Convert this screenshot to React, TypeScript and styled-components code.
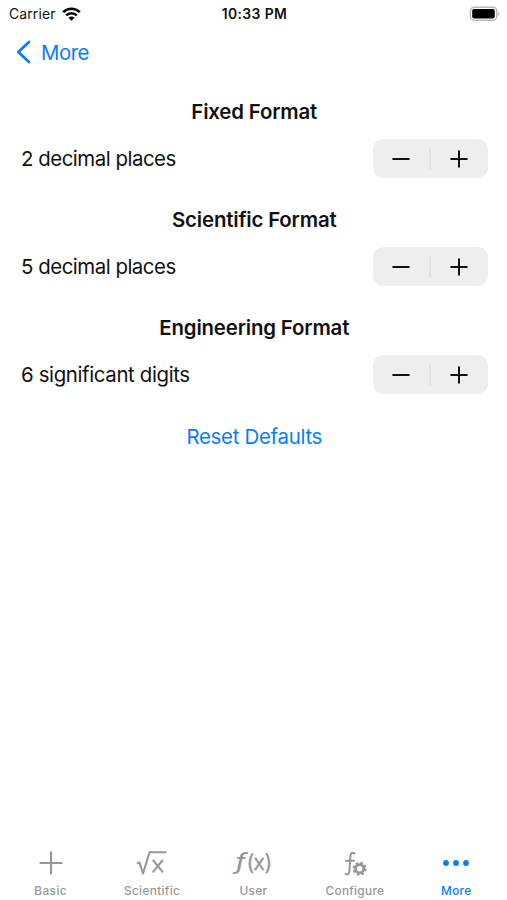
import React, { useState } from "react";
import styled, { createGlobalStyle } from "styled-components";

const BLUE = "#0a7cf8";
const GREY = "#979797";

const GlobalStyle = createGlobalStyle`
  * { box-sizing: border-box; }
  body { margin: 0; background: #fff; }
  button { font: inherit; border: 0; padding: 0; background: none; cursor: pointer; }
`;

const Screen = styled.div`
  display: flex;
  flex-direction: column;
  width: 100%;
  height: 900px;
  overflow: hidden;
  background: #fff;
  color: #111;
  font-family: Inter, "Liberation Sans", sans-serif;
`;

const StatusBar = styled.header`
  display: grid;
  grid-template-columns: 1fr auto 1fr;
  align-items: center;
  height: 27px;
  padding: 0 7px 0 9px;
  font-size: 13.9px;
  line-height: 17px;
`;

const Carrier = styled.div`
  display: flex;
  align-items: center;
  gap: 6px;
  letter-spacing: 0.15px;

  span { padding-top: 1px; }
`;

const Clock = styled.div`
  padding-top: 2px;
  font-weight: 600;
  font-size: 13.9px;
  letter-spacing: 0.4px;
`;

const BatterySlot = styled.div`
  display: flex;
  justify-content: flex-end;
`;

const NavBar = styled.nav`
  display: flex;
  align-items: center;
  height: 50px;
  padding-left: 16px;
`;

const BackButton = styled.button`
  display: flex;
  align-items: center;
  gap: 9px;
  color: ${BLUE};
  font-size: 20.4px;
  line-height: 24px;
  letter-spacing: -0.5px;

  span { padding-top: 1px; }
`;

const Content = styled.main`
  flex: 1;
  display: flex;
  flex-direction: column;
  padding: 23px 19.5px 0 21px;
`;

const Section = styled.section`
  height: 108.2px;
`;

const Heading = styled.h2<{ $spacing: number }>`
  margin: 0;
  height: 24px;
  font-size: 20.4px;
  line-height: 24px;
  font-weight: 600;
  text-align: center;
  letter-spacing: ${(p) => p.$spacing}px;
`;

const SettingRow = styled.div`
  display: flex;
  align-items: center;
  justify-content: space-between;
  height: 39px;
  margin-top: 15px;
`;

const SettingLabel = styled.span<{ $spacing: number }>`
  font-size: 20.4px;
  line-height: 24px;
  letter-spacing: ${(p) => p.$spacing}px;
`;

const Stepper = styled.div`
  display: flex;
  align-items: center;
  width: 115px;
  height: 39px;
  border-radius: 10px;
  background: #eeeeef;
`;

const StepButton = styled.button`
  flex: 1;
  height: 100%;
  display: flex;
  align-items: center;
  justify-content: center;
  color: #111;
`;

const StepDivider = styled.span`
  width: 2px;
  height: 22px;
  border-radius: 1px;
  background: #e2e2e3;
`;

const ResetButton = styled.button`
  align-self: center;
  color: ${BLUE};
  font-size: 20.4px;
  line-height: 24px;
  letter-spacing: -0.28px;
`;

const TabBar = styled.footer`
  display: grid;
  grid-template-columns: repeat(5, 1fr);
  height: 53px;
`;

const Tab = styled.button<{ $active: boolean }>`
  display: flex;
  flex-direction: column;
  align-items: center;
  color: ${(p) => (p.$active ? BLUE : GREY)};
`;

const TabLabel = styled.span<{ $spacing: number }>`
  margin-top: 5px;
  font-size: 11.8px;
  line-height: 14px;
  font-weight: 500;
  letter-spacing: ${(p) => p.$spacing}px;
`;

const TabIcon = styled.svg`
  display: block;
  width: 44px;
  height: 32px;
  fill: none;
  stroke: currentColor;
  stroke-linecap: round;
  stroke-linejoin: round;

  text {
    fill: currentColor;
    font-family: Inter, sans-serif;
  }
`;

const WifiIcon = () => (
  <svg width="19" height="14" viewBox="0 0 19 14" fill="none" stroke="#000" strokeWidth="2.5">
    <path d="M1.2 5.2C5.8 .6 13.2 .6 17.8 5.2" />
    <path d="M4.1 8.3C7.1 5.4 11.9 5.4 14.9 8.3" />
    <path d="M6.5 10.7C8.2 9.1 10.8 9.1 12.5 10.7L9.5 13.7Z" fill="#000" stroke="none" />
  </svg>
);

const BatteryIcon = () => (
  <svg width="31" height="16" viewBox="0 0 31 16">
    <rect x="1.4" y="1.2" width="26.4" height="13" rx="4" fill="#fff" stroke="#b8b8b8" strokeWidth="1.5" />
    <rect x="3.2" y="3" width="22.6" height="9.4" rx="1.8" fill="#000" />
    <path d="M29.3 5.5C31 6.2 31 9.2 29.3 9.9Z" fill="#b8b8b8" />
  </svg>
);

const ChevronIcon = () => (
  <svg width="16" height="24" viewBox="0 0 16 24" fill="none" stroke="currentColor" strokeWidth="2.7" strokeLinecap="round" strokeLinejoin="round">
    <path d="M13 2L2.3 12L13 22" />
  </svg>
);

const StepIcon = ({ plus }: { plus?: boolean }) => (
  <svg width="18" height="18" viewBox="0 0 18 18" fill="none" stroke="currentColor" strokeWidth="2" strokeLinecap="round">
    <path d={plus ? "M1.2 9H16.8M9 1.2V16.8" : "M1.2 9H16.8"} />
  </svg>
);

const BasicIcon = () => (
  <TabIcon viewBox="0 0 44 32" strokeWidth="2.2">
    <path d="M11.4 16H32.6M22 5.4V26.6" />
  </TabIcon>
);

const RootIcon = () => (
  <TabIcon viewBox="0 0 44 32" strokeWidth="2.1">
    <path d="M7.8 16.2L9.5 15.6L13 26.5L19.6 5.3H35.6" />
    <path d="M23.3 13.5L32.4 24.7M32.4 13.5L23.3 24.7" />
  </TabIcon>
);

const FunctionIcon = () => (
  <TabIcon viewBox="0 0 44 32" strokeWidth="2">
    <text transform="translate(3.6 22) scale(1.35 1)" fontSize="22.5" fontStyle="italic" strokeWidth="0">ƒ</text>
    <text x="15.6" y="22.6" fontSize="21.5" strokeWidth="0.3">(</text>
    <text x="22.2" y="22.6" fontSize="21.5" strokeWidth="0.3">x</text>
    <text x="33.6" y="22.6" fontSize="21.5" strokeWidth="0.3">)</text>
  </TabIcon>
);

const ConfigureIcon = () => (
  <TabIcon viewBox="0 0 44 32" strokeWidth="2">
    <path d="M21.6 6.4C19.6 4.8 17.8 6 17.5 8.7L16.4 24.2C16.1 27.4 14.4 28.2 12.6 27M12.8 13.8H21" />
    <circle cx="26.6" cy="21.7" r="4.1" strokeWidth="2.8" />
    <circle cx="26.6" cy="21.7" r="5.9" strokeWidth="2.2" strokeLinecap="butt" strokeDasharray="2.5 2.134" />
  </TabIcon>
);

const MoreIcon = () => (
  <TabIcon viewBox="0 0 44 32">
    <g fill="currentColor" stroke="none">
      <circle cx="12" cy="16" r="2.9" />
      <circle cx="22" cy="16" r="2.9" />
      <circle cx="32" cy="16" r="2.9" />
    </g>
  </TabIcon>
);

const formats = [
  { title: "Fixed Format", unit: "decimal places", initial: 2, titleSpacing: -0.16, labelSpacing: -0.47 },
  { title: "Scientific Format", unit: "decimal places", initial: 5, titleSpacing: -0.16, labelSpacing: -0.47 },
  { title: "Engineering Format", unit: "significant digits", initial: 6, titleSpacing: -0.16, labelSpacing: -0.36 },
];

const tabs = [
  { name: "Basic", Icon: BasicIcon, spacing: 0.45 },
  { name: "Scientific", Icon: RootIcon, spacing: 0.35 },
  { name: "User", Icon: FunctionIcon, spacing: 0.35 },
  { name: "Configure", Icon: ConfigureIcon, spacing: 0.3 },
  { name: "More", Icon: MoreIcon, spacing: 0.3 },
];

export default function App() {
  const [values, setValues] = useState(formats.map((f) => f.initial));
  const [active, setActive] = useState("More");

  const step = (index: number, delta: number) =>
    setValues((current) => current.map((v, i) => (i === index ? Math.max(0, v + delta) : v)));

  return (
    <Screen>
      <GlobalStyle />
      <StatusBar>
        <Carrier>
          <span>Carrier</span>
          <WifiIcon />
        </Carrier>
        <Clock>10:33 PM</Clock>
        <BatterySlot>
          <BatteryIcon />
        </BatterySlot>
      </StatusBar>
      <NavBar>
        <BackButton>
          <ChevronIcon />
          <span>More</span>
        </BackButton>
      </NavBar>
      <Content>
        {formats.map((format, i) => (
          <Section key={format.title}>
            <Heading $spacing={format.titleSpacing}>{format.title}</Heading>
            <SettingRow>
              <SettingLabel $spacing={format.labelSpacing}>
                {values[i]} {format.unit}
              </SettingLabel>
              <Stepper>
                <StepButton aria-label="Decrease" onClick={() => step(i, -1)}>
                  <StepIcon />
                </StepButton>
                <StepDivider />
                <StepButton aria-label="Increase" onClick={() => step(i, 1)}>
                  <StepIcon plus />
                </StepButton>
              </Stepper>
            </SettingRow>
          </Section>
        ))}
        <ResetButton onClick={() => setValues(formats.map((f) => f.initial))}>Reset Defaults</ResetButton>
      </Content>
      <TabBar>
        {tabs.map(({ name, Icon, spacing }) => (
          <Tab key={name} $active={active === name} onClick={() => setActive(name)}>
            <Icon />
            <TabLabel $spacing={spacing}>{name}</TabLabel>
          </Tab>
        ))}
      </TabBar>
    </Screen>
  );
}
